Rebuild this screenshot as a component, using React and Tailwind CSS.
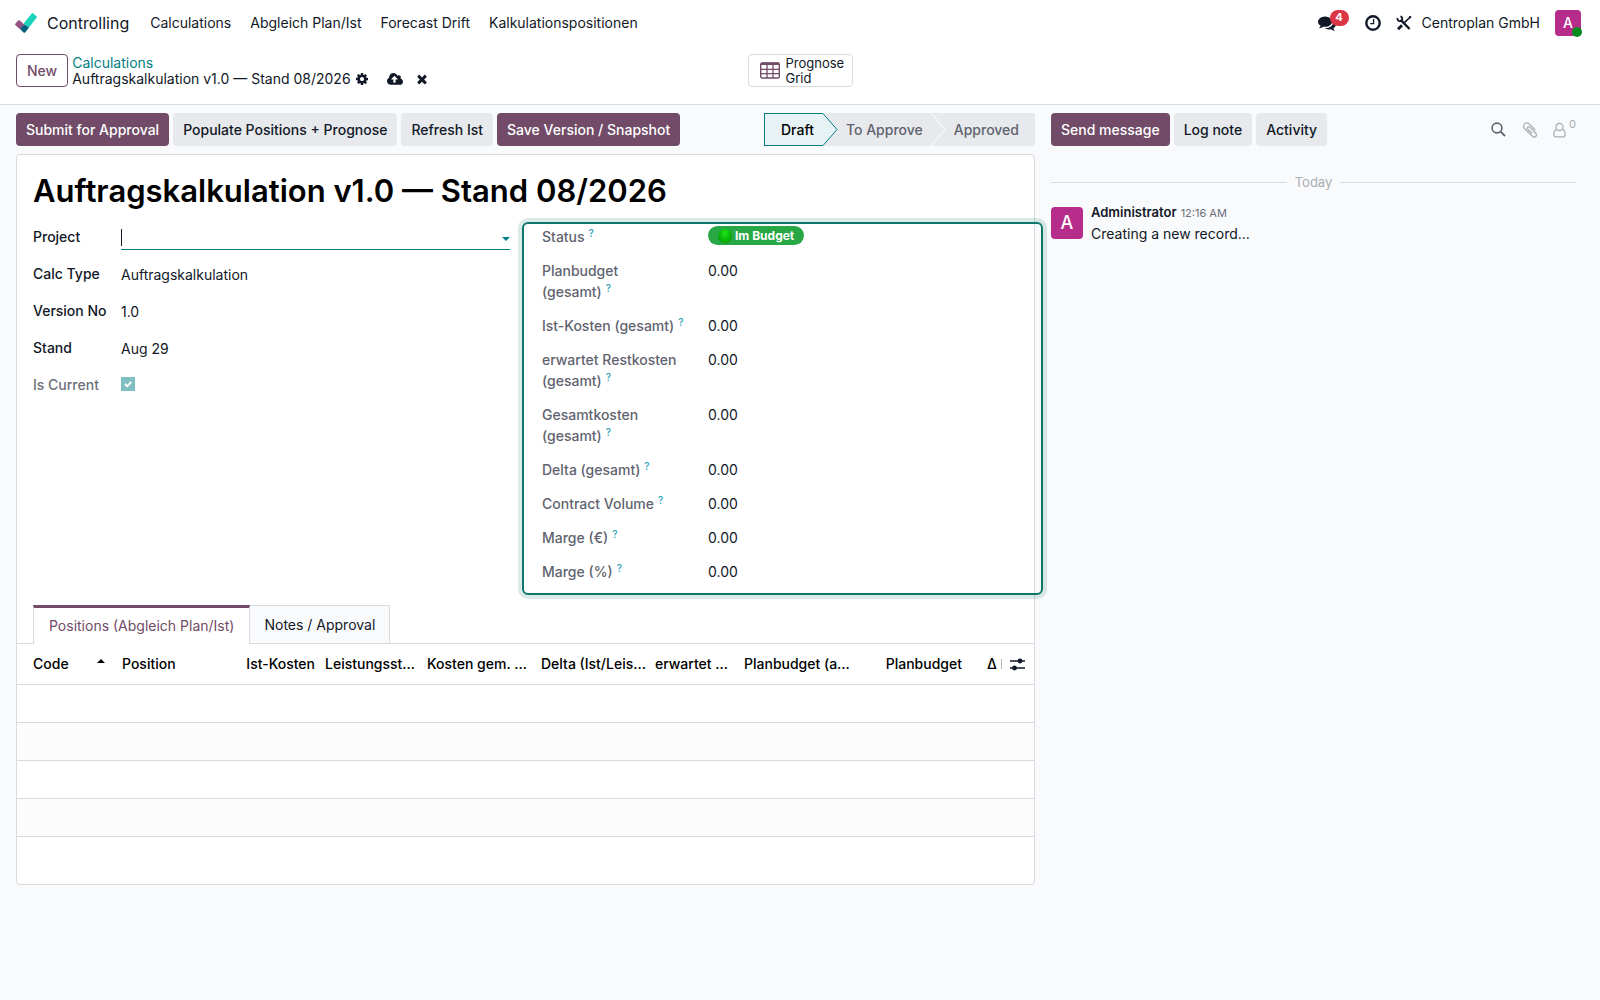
import React, { useState } from "react";

const menuItems = ["Calculations", "Abgleich Plan/Ist", "Forecast Drift", "Kalkulationspositionen"];

const totals = [
    { label: "Planbudget (gesamt)", value: "0.00" },
    { label: "Ist-Kosten (gesamt)", value: "0.00" },
    { label: "erwartet Restkosten (gesamt)", value: "0.00" },
    { label: "Gesamtkosten (gesamt)", value: "0.00" },
    { label: "Delta (gesamt)", value: "0.00" },
    { label: "Contract Volume", value: "0.00" },
    { label: "Marge (€)", value: "0.00" },
    { label: "Marge (%)", value: "0.00" },
];

const columns = [
    { label: "Position", width: "w-[122px]", align: "text-left" },
    { label: "Ist-Kosten", width: "w-[81px]", align: "text-right" },
    { label: "Leistungsst...", width: "w-[102px]", align: "text-left" },
    { label: "Kosten gem. ...", width: "w-[114px]", align: "text-left" },
    { label: "Delta (Ist/Leis...", width: "w-[114px]", align: "text-left" },
    { label: "erwartet ...", width: "w-[89px]", align: "text-left" },
    { label: "Planbudget (a...", width: "w-[121px]", align: "text-left" },
    { label: "Planbudget", width: "w-[107px]", align: "text-right" },
];

const paths = {
    cog: "M1152 896q0-106-75-181t-181-75-181 75-75 181 75 181 181 75 181-75 75-181zm512-109v222q0 12-8 23t-20 13l-185 28q-19 54-39 91 35 50 107 138 10 12 10 25t-9 23q-27 37-99 108t-94 71q-12 0-26-9l-138-108q-44 23-91 38-16 136-29 186-7 28-36 28h-222q-14 0-24.5-8.5t-11.5-21.5l-28-184q-49-16-90-37l-141 107q-10 9-25 9-14 0-25-11-126-114-165-168-7-10-7-23 0-12 8-23 15-21 51-66.5t54-70.5q-27-50-41-99l-183-27q-13-2-21-12.5t-8-23.5v-222q0-12 8-23t19-13l186-28q14-46 39-92-40-57-107-138-10-12-10-24 0-10 9-23 26-36 98.5-107.5t94.5-71.5q13 0 26 10l138 107q44-23 91-38 16-136 29-186 7-28 36-28h222q14 0 24.5 8.5t11.5 21.5l28 184q49 16 90 37l142-107q9-9 24-9 13 0 25 10 129 119 165 170 7 8 7 22 0 12-8 23-15 21-51 66.5t-54 70.5q26 50 41 98l183 28q13 2 21 12.5t8 23.5z",
    times: "M1490 1322q0 40-28 68l-136 136q-28 28-68 28t-68-28l-294-294-294 294q-28 28-68 28t-68-28l-136-136q-28-28-28-68t28-68l294-294-294-294q-28-28-28-68t28-68l136-136q28-28 68-28t68 28l294 294 294-294q28-28 68-28t68 28l136 136q28 28 28 68t-28 68l-294 294 294 294q28 28 28 68z",
    cloud: "M1280 864q0-14-9-23l-352-352q-9-9-23-9t-23 9l-351 351q-10 12-10 24 0 14 9 23t23 9h224v352q0 13 9.5 22.5t22.5 9.5h192q13 0 22.5-9.5t9.5-22.5v-352h224q13 0 22.5-9.5t9.5-22.5zm640 288q0 159-112.5 271.5t-271.5 112.5h-1088q-185 0-316.5-131.5t-131.5-316.5q0-130 70-240t188-165q-2-30-2-43 0-212 150-362t362-150q156 0 285.5 87t188.5 231q71-62 166-62 106 0 181 75t75 181q0 76-41 138 130 31 213.5 135.5t83.5 238.5z",
    comments: "M1408 768q0 139-94 257t-256.5 186.5-353.5 68.5q-86 0-176-16-124 88-278 128-36 9-86 16h-3q-11 0-20.5-8t-11.5-21q-1-3-1-6.5t.5-6.5 2-6l2.5-5 3.5-5.5 4-5 4.5-5 4-4.5q5-6 23-25t26-29.5 22.5-29 25-38.5 20.5-44q-124-72-195-177t-71-224q0-139 94-257t256.5-186.5 353.5-68.5 353.5 68.5 256.5 186.5 94 257zm384 256q0 120-71 224.5t-195 176.5q10 24 20.5 44t25 38.5 22.5 29 26 29.5 23 25q1 1 4 4.5t4.5 5 4 5 3.5 5.5l2.5 5 2 6 .5 6.5-1 6.5q-3 14-13 22t-22 7q-50-7-86-16-154-40-278-128-90 16-176 16-271 0-472-132 58 4 88 4 161 0 309-45t264-129q125-92 192-212t67-254q0-77-23-152 129 71 204 178t75 230z",
    paperclip: "M1596 1385q0 117-79 196t-196 79q-135 0-235-100l-777-776q-113-115-113-271 0-159 110-270t269-111q158 0 273 113l605 606q10 10 10 22 0 16-30.5 46.5t-46.5 30.5q-13 0-23-10l-606-607q-79-77-181-77-106 0-179 75t-73 181q0 105 76 181l776 777q63 63 145 63 64 0 106-42t42-106q0-82-63-145l-581-581q-26-24-60-24-29 0-48 19t-19 48q0 32 25 59l410 410q10 10 10 22 0 16-31 47t-47 31q-12 0-22-10l-410-410q-63-61-63-149 0-82 57-139t139-57q88 0 149 63l581 581q100 98 100 235z",
};

const Icon = ({ name, className, viewBox = "0 0 1792 1792" }) => (
    <svg viewBox={viewBox} fill="currentColor" className={className} aria-hidden="true">
        <path d={paths[name]} />
    </svg>
);

const Logo = () => (
    <svg viewBox="0 0 22 20" className="w-[22px] h-5" aria-hidden="true">
        <path d="M0.5 10.6L3.2 7.6Q4 6.9 4.8 7.6L9.2 11.6L5 16.2L0.5 12.2Q-0.2 11.4 0.5 10.6Z" fill="#985184" />
        <path d="M16.8 0.4Q17.6 -0.2 18.4 0.4L21.5 3.2Q22.2 3.9 21.6 4.7L14 14.6L8.6 10.4Z" fill="#1ad3bb" />
        <path d="M9.2 11.2L14 14.4L10.4 19.2Q9.5 20.2 8.5 19.4L5 16.1Z" fill="#005e7a" />
    </svg>
);

const Button = ({ primary, children }) => (
    <button
        className={
            primary
                ? "h-[33px] px-[10px] rounded bg-[#714b67] text-white font-medium whitespace-nowrap cursor-pointer"
                : "h-[33px] px-[10px] rounded bg-[#e7e9ed] text-[#111827] font-medium whitespace-nowrap cursor-pointer"
        }
    >
        {children}
    </button>
);

const Navbar = () => (
    <header className="flex items-center justify-between h-[46px] pl-[15px] pr-[19px] text-[#111827]">
        <nav className="flex items-center">
            <Logo />
            <a href="#home" className="ml-[10px] mr-[21px] text-base">Controlling</a>
            <div className="flex gap-[19px]">
                {menuItems.map((item) => (
                    <a key={item} href="#menu">{item}</a>
                ))}
            </div>
        </nav>
        <div className="flex items-center">
            <button aria-label="Messages" className="relative mr-[29px] cursor-pointer">
                <Icon name="comments" className="size-[18px]" />
                <span className="absolute -top-1 left-3 flex items-center justify-center w-[19px] h-4 rounded-full bg-[#dc3545] text-white text-[11px] font-bold">4</span>
            </button>
            <button aria-label="Activities" className="mr-[15px] cursor-pointer">
                <svg viewBox="0 0 16 16" className="size-4" fill="none" stroke="currentColor" aria-hidden="true">
                    <circle cx="8" cy="8" r="6.7" strokeWidth="2.4" />
                    <path d="M8.6 4v4.7H5.2" strokeWidth="1.3" />
                </svg>
            </button>
            <button aria-label="Developer tools" className="mr-[10px] cursor-pointer">
                <svg viewBox="0 0 16 16" className="size-4" fill="none" stroke="currentColor" aria-hidden="true">
                    <path d="M4.6 4.8L13.6 14" strokeWidth="2.4" />
                    <path d="M1.6 3A2.4 2.4 0 1 0 4.4 1.4" strokeWidth="1.9" />
                    <path d="M14.8 1.4L8.4 7.6" strokeWidth="1.5" />
                    <path d="M13.4 1.4L15 2.8" strokeWidth="1.6" />
                    <path d="M6 10.2L2 14.2" strokeWidth="2.8" />
                </svg>
            </button>
            <span>Centroplan GmbH</span>
            <button aria-label="Administrator" className="relative ml-[15px] size-[26px] rounded bg-[#b62c8b] text-white font-medium cursor-pointer">
                A
                <span className="absolute -right-px -bottom-px size-[10px] rounded-full bg-[#058b1d]" />
            </button>
        </div>
    </header>
);

const ControlPanel = () => (
    <div className="grid grid-cols-[1fr_auto_1fr] h-[59px] pt-2 px-4 border-b border-[#d8dadd] text-[#111827]">
        <div className="flex items-start">
            <button className="h-[33px] px-[10px] rounded border border-[#714b67] text-[#714b67] font-medium cursor-pointer">New</button>
            <div className="ml-1 pt-px">
                <a href="#calculations" className="block leading-4 text-[#017e84]">Calculations</a>
                <div className="flex items-center leading-4">
                    <span>Auftragskalkulation v1.0 — Stand 08/2026</span>
                    <button aria-label="Actions" className="ml-1 cursor-pointer"><Icon name="cog" className="size-[14px]" /></button>
                    <button aria-label="Save" className="ml-[18px] cursor-pointer"><Icon name="cloud" viewBox="0 0 1920 1792" className="w-4 h-[15px]" /></button>
                    <button aria-label="Discard" className="ml-3 cursor-pointer"><Icon name="times" className="size-[14px]" /></button>
                </div>
            </div>
        </div>
        <button className="flex items-center gap-[6px] w-[105px] h-[33px] pl-[11px] rounded border border-[#d8dadd] text-[13px] leading-[15px] text-left cursor-pointer">
            <svg viewBox="0 0 20 17" className="w-5 h-[17px]" fill="none" stroke="#714b67" aria-hidden="true">
                <rect x="0.7" y="1" width="18.6" height="15" rx="1.5" strokeWidth="1.4" />
                <path d="M1 1.8H19" strokeWidth="2.4" />
                <path d="M1 7.3H19M1 11.6H19M7 2V16M13 2V16" strokeWidth="1.3" />
            </svg>
            <span>Prognose<br />Grid</span>
        </button>
    </div>
);

const StatusBar = () => (
    <div className="flex h-[33px] font-medium">
        <button className="pl-4 pr-[9px] bg-[#e6f2f3] border border-r-0 border-[#017e84] text-black cursor-pointer">Draft</button>
        <svg viewBox="0 0 15 33" className="w-[15px] h-[33px]" aria-hidden="true">
            <rect width="15" height="33" fill="#e7e9ed" />
            <path d="M0 0.5L14 16.5L0 32.5Z" fill="#e6f2f3" />
            <path d="M0 0.5L14 16.5L0 32.5" fill="none" stroke="#017e84" />
        </svg>
        <button className="px-2 bg-[#e7e9ed] text-[#5f636f] whitespace-nowrap cursor-pointer">To Approve</button>
        <svg viewBox="0 0 15 33" className="w-[15px] h-[33px]" aria-hidden="true">
            <rect width="15" height="33" fill="#e7e9ed" />
            <path d="M0 0L14 16.5L0 33" fill="none" stroke="#fff" />
        </svg>
        <button className="pl-2 pr-4 bg-[#e7e9ed] text-[#5f636f] rounded-r-xs cursor-pointer">Approved</button>
    </div>
);

const Help = () => <sup className="ml-1 text-[10px] leading-none text-[#2f9fb8]">?</sup>;

const GeneralFields = () => {
    const [project, setProject] = useState("");

    return (
        <div className="flex flex-col pt-1 text-[#111827]">
            <div className="flex h-[37px]">
                <label htmlFor="project" className="w-[88px] leading-[21px] font-medium">Project</label>
                <div className="flex flex-1 items-center h-6 border-b border-[#017e84]">
                    <span className="w-px h-[17px] bg-[#111827]" />
                    <input
                        id="project"
                        value={project}
                        onChange={(e) => setProject(e.target.value)}
                        className="flex-1 min-w-0 outline-none caret-transparent"
                    />
                    <svg viewBox="0 0 8 4" className="w-2 h-1 mt-[2px] text-[#017e84]" fill="currentColor" aria-hidden="true">
                        <path d="M0 0H8L4 4Z" />
                    </svg>
                </div>
            </div>
            <div className="flex h-[37px]">
                <label htmlFor="calc-type" className="w-[88px] leading-[21px] font-medium">Calc Type</label>
                <select id="calc-type" className="flex-1 h-6 appearance-none outline-none">
                    <option>Auftragskalkulation</option>
                </select>
            </div>
            <div className="flex h-[37px]">
                <label htmlFor="version" className="w-[88px] leading-[21px] font-medium">Version No</label>
                <input id="version" defaultValue="1.0" className="flex-1 h-[22px] outline-none" />
            </div>
            <div className="flex h-[37px]">
                <label htmlFor="stand" className="w-[88px] leading-[21px] font-medium">Stand</label>
                <input id="stand" defaultValue="Aug 29" className="flex-1 h-[22px] outline-none" />
            </div>
            <div className="flex h-[37px]">
                <label htmlFor="current" className="w-[88px] leading-[21px] font-medium text-[#6b6f7a]">Is Current</label>
                <div className="relative size-[14px] mt-[3px]">
                    <input id="current" type="checkbox" checked disabled readOnly className="block size-[14px] appearance-none bg-[#80bfc2]" />
                    <svg viewBox="0 0 14 14" className="absolute inset-0 size-[14px]" fill="none" stroke="#fff" strokeWidth="1.8" aria-hidden="true">
                        <path d="M4 7L6.2 9.2L10.3 5" />
                    </svg>
                </div>
            </div>
        </div>
    );
};

const BudgetBox = () => (
    <dl className="pt-[2px] pl-[18px] rounded-md border-2 border-[#0f766e] ring-4 ring-[#0f766e]/15 text-[#111827]">
        <div className="flex gap-5 pb-[13px] leading-[21px]">
            <dt className="w-[146px] font-medium text-[#5f636f]">Status<Help /></dt>
            <dd>
                <span className="flex items-center gap-[3px] h-[19px] px-[10px] rounded-full bg-[#28a745] text-white text-xs font-bold">
                    <span className="size-[14px] rounded-full bg-radial-[at_50%_30%] from-[#1fe01a] via-[#08bd08] to-[#047a04]" />
                    Im Budget
                </span>
            </dd>
        </div>
        {totals.map((row) => (
            <div key={row.label} className="flex gap-5 pb-[13px] leading-[21px] last:pb-[11px]">
                <dt className="w-[146px] font-medium text-[#5f636f]">{row.label}<Help /></dt>
                <dd>{row.value}</dd>
            </div>
        ))}
    </dl>
);

const PositionsTable = () => (
    <table className="w-full table-fixed border-collapse">
        <thead>
            <tr className="h-10 border-b border-[#d8dadd] text-black">
                <th className="w-[100px] pl-4 pr-3 font-medium">
                    <div className="flex items-center justify-between">
                        Code
                        <svg viewBox="0 0 8 4" className="w-2 h-1 mb-[6px]" fill="currentColor" aria-hidden="true">
                            <path d="M0 4H8L4 0Z" />
                        </svg>
                    </div>
                </th>
                {columns.map((col) => (
                    <th key={col.label} className={`${col.width} ${col.align} px-[5px] font-medium whitespace-nowrap`}>
                        {col.label}
                    </th>
                ))}
                <th className="pl-5 font-medium">
                    <div className="flex items-center">
                        Δ
                        <span className="w-px h-[10px] ml-1 bg-[#b5b7bb]" />
                        <button aria-label="Optional columns" className="ml-2 cursor-pointer">
                            <svg viewBox="0 0 15 14" className="w-[15px] h-[14px]" fill="none" stroke="#111827" aria-hidden="true">
                                <path d="M0 4H15M0 11H15" strokeWidth="1.4" />
                                <circle cx="10" cy="4" r="2.4" fill="#111827" stroke="none" />
                                <circle cx="4.5" cy="11" r="2.4" fill="#111827" stroke="none" />
                            </svg>
                        </button>
                    </div>
                </th>
            </tr>
        </thead>
        <tbody>
            {[1, 2, 3, 4].map((row) => (
                <tr key={row} className="h-[38px] border-b border-[#d8dadd] even:bg-[#fcfcfc]">
                    <td colSpan={10} />
                </tr>
            ))}
        </tbody>
    </table>
);

const Sheet = () => (
    <main className="mt-2 rounded border border-[#d8dadd] bg-white">
        <h1 className="pl-4 pt-[15px] text-[31px] leading-[42px] font-semibold text-black">Auftragskalkulation v1.0 — Stand 08/2026</h1>
        <div className="grid grid-cols-[minmax(0,477fr)_minmax(0,521fr)] gap-3 mt-[10px] pl-4 -mr-[9px]">
            <GeneralFields />
            <BudgetBox />
        </div>
        <div className="flex items-end mt-[10px] pl-4 border-b border-[#d8dadd]">
            <button className="h-[39px] -mb-px px-[15px] border-x border-t-3 border-x-[#d8dadd] border-t-[#714b67] bg-white text-[#714b67] cursor-pointer">
                Positions (Abgleich Plan/Ist)
            </button>
            <button className="h-[38px] px-[14px] border-t border-r border-[#d8dadd] bg-[#f9fafb] text-[#111827] cursor-pointer">
                Notes / Approval
            </button>
        </div>
        <PositionsTable />
        <div className="h-[47px]" />
    </main>
);

const Chatter = () => (
    <aside className="pr-6 text-[#111827]">
        <div className="flex items-center justify-between">
            <div className="flex gap-1">
                <Button primary>Send message</Button>
                <Button>Log note</Button>
                <Button>Activity</Button>
            </div>
            <div className="flex items-center text-[#a9acb3]">
                <button aria-label="Search messages" className="mr-[15px] text-[#5f636f] cursor-pointer">
                    <svg viewBox="0 0 15 15" className="size-[15px]" fill="none" stroke="currentColor" aria-hidden="true">
                        <circle cx="6" cy="6" r="4.9" strokeWidth="1.6" />
                        <path d="M9.6 9.6L14 14" strokeWidth="1.8" />
                    </svg>
                </button>
                <button aria-label="Attach files" className="mr-[14px] cursor-pointer"><Icon name="paperclip" className="size-[18px]" /></button>
                <button aria-label="Followers" className="flex cursor-pointer">
                    <svg viewBox="0 0 13 16" className="w-[13px] h-4" fill="none" stroke="currentColor" strokeWidth="1.2" aria-hidden="true">
                        <circle cx="6.5" cy="5" r="3.6" />
                        <path d="M3.6 7.2Q0.8 8.3 0.8 12.6Q0.8 14.8 2.8 14.8H10.2Q12.2 14.8 12.2 12.6Q12.2 8.3 9.4 7.2" />
                    </svg>
                    <span className="-mt-1 ml-[3px] text-[11px] leading-3">0</span>
                </button>
            </div>
        </div>
        <div className="flex items-center gap-2 mt-[26px] text-[13px] leading-5 text-[#a9acb3]">
            <hr className="flex-1 border-[#d8dadd]" />
            Today
            <hr className="flex-1 border-[#d8dadd]" />
        </div>
        <article className="flex gap-2 mt-[15px]">
            <div className="flex items-center justify-center size-8 rounded bg-[#b62c8b] text-white text-lg font-medium">A</div>
            <div className="-mt-[5px]">
                <div className="flex items-baseline gap-1 leading-5">
                    <span className="text-[13px] font-semibold">Administrator</span>
                    <span className="text-[11px] text-[#6b6f7a]">12:16 AM</span>
                </div>
                <p className="leading-[21px]">Creating a new record...</p>
            </div>
        </article>
    </aside>
);

const App = () => (
    <div className="min-h-screen bg-[#f9fafb] font-['Inter',sans-serif] text-sm">
        <div className="bg-white">
            <Navbar />
            <ControlPanel />
        </div>
        <div className="grid grid-cols-[minmax(0,1019fr)_minmax(0,549fr)] gap-4 pl-4 pt-2">
            <div>
                <div className="flex items-center justify-between">
                    <div className="flex gap-1">
                        <Button primary>Submit for Approval</Button>
                        <Button>Populate Positions + Prognose</Button>
                        <Button>Refresh Ist</Button>
                        <Button primary>Save Version / Snapshot</Button>
                    </div>
                    <StatusBar />
                </div>
                <Sheet />
            </div>
            <Chatter />
        </div>
    </div>
);

export default App;
